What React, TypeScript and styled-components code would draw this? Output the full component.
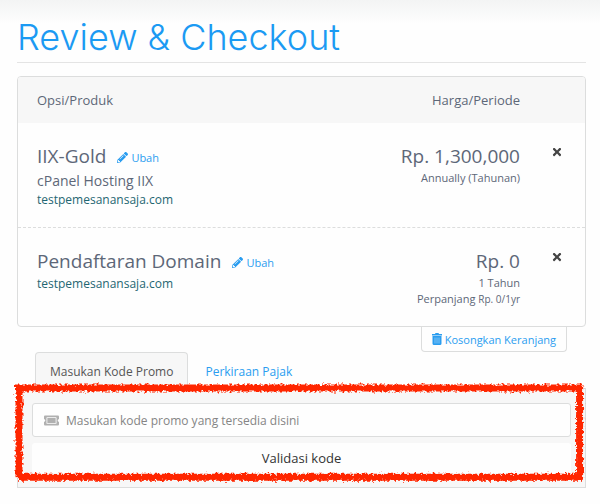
import React, { useState } from "react";
import styled, { createGlobalStyle } from "styled-components";
import { FaPencilAlt, FaTicketAlt, FaTimes } from "react-icons/fa";

const GlobalStyle = createGlobalStyle`
  * { box-sizing: border-box; }
  body {
    margin: 0;
    background: #fefefe;
    color: #5d6778;
    font-family: "Open Sans", "Noto Sans", sans-serif;
    font-size: 14px;
  }
  button, input { font-family: inherit; }
`;

const Page = styled.main`
  padding: 14px 14px 16px 17px;
  background: linear-gradient(#f3f4f4, #fefefe 24px);
`;

const Title = styled.h1`
  margin: 0 0 13px;
  padding-bottom: 1px;
  border-bottom: 1px solid #e4e4e4;
  color: #1b9af3;
  font: 300 36px/47px Inter, sans-serif;
`;

const Card = styled.section`
  border: 1px solid #dcdddd;
  border-radius: 4px;
  background: #fefefe;
  overflow: hidden;
`;

const CardHeader = styled.header`
  display: flex;
  justify-content: space-between;
  padding: 13px 65px 13px 19px;
  background: #f7f7f7;
  font-size: 13px;
  line-height: 20px;
`;

const Item = styled.article`
  display: grid;
  grid-template-columns: 1fr auto 16px;
  padding: 19px 20px 18px 19px;

  & + & {
    border-top: 1px dashed #dcdddd;
  }
`;

const ItemMain = styled.div`
  display: flex;
  flex-direction: column;
  align-items: flex-start;
`;

const NameRow = styled.div`
  display: flex;
  align-items: center;
  gap: 11px;
`;

const Name = styled.h2`
  margin: 0;
  font-size: 19px;
  line-height: 28px;
  font-weight: 400;
`;

const EditLink = styled.a`
  display: inline-flex;
  align-items: center;
  gap: 3px;
  padding-top: 3px;
  color: #2a9df0;
  font-size: 11px;
  line-height: 16px;
  text-decoration: none;
`;

const Group = styled.span`
  font-size: 14px;
  line-height: 21px;
`;

const Domain = styled.span`
  color: #1f6672;
  font-size: 12px;
  line-height: 18px;
`;

const Pricing = styled.div`
  display: flex;
  flex-direction: column;
  align-items: flex-end;
  margin-right: 29px;
  padding-bottom: 1px;
  font-size: 11px;
  line-height: 16px;
`;

const Price = styled.span`
  font-size: 19px;
  line-height: 28px;
`;

const Small = styled.small`
  font-size: 10px;
`;

const RemoveButton = styled.button`
  align-self: start;
  display: grid;
  place-items: center;
  height: 20px;
  padding: 0;
  border: 0;
  background: none;
  color: #444;
  font-size: 12px;
`;

const EmptyRow = styled.div`
  display: flex;
  justify-content: flex-end;
  padding-right: 19px;
`;

const EmptyButton = styled.button`
  display: flex;
  align-items: center;
  gap: 3px;
  height: 25px;
  padding: 0 10px;
  border: 1px solid #dcdddd;
  border-top: 0;
  border-radius: 0 0 4px 4px;
  background: #fefefe;
  color: #2a9df0;
  font-size: 11px;
`;

const Tabs = styled.div`
  display: flex;
  gap: 2px;
  padding-left: 18px;
`;

const Tab = styled.button<{ $active: boolean }>`
  height: 37px;
  margin-bottom: -1px;
  padding: 0 14px;
  border: 1px solid ${(p) => (p.$active ? "#dcdddd" : "transparent")};
  border-bottom: 0;
  border-radius: 4px 4px 0 0;
  background: ${(p) => (p.$active ? "#f7f7f7" : "transparent")};
  color: ${(p) => (p.$active ? "#555" : "#2a9df0")};
  font-size: 12px;
`;

const Panel = styled.form`
  position: relative;
  display: flex;
  flex-direction: column;
  gap: 6px;
  padding: 14px;
  border: 1px solid #dcdddd;
  background: #f7f7f7;
`;

const Field = styled.label`
  display: flex;
  align-items: center;
  gap: 7px;
  height: 34px;
  padding: 0 11px;
  border: 1px solid #dcdddd;
  border-radius: 3px;
  background: #fefefe;
  color: #b0b0b0;
  font-size: 15px;
`;

const CodeInput = styled.input`
  flex: 1;
  min-width: 0;
  padding: 0;
  border: 0;
  outline: 0;
  background: none;
  color: #555;
  font-size: 12px;

  &::placeholder { color: #858585; opacity: 1; }
`;

const SubmitButton = styled.button`
  height: 30px;
  border: 0;
  border-radius: 3px;
  background: #fefefe;
  color: #333;
  font-size: 13px;
`;

const TrashIcon = () => (
  <svg width="10" height="12" viewBox="0 0 20 24" aria-hidden="true">
    <path
      fill="#2a9df0"
      d="M7 0h6l1 2h6v3H0V2h6zM1 6h18v15a3 3 0 0 1-3 3H4a3 3 0 0 1-3-3z"
    />
    <path stroke="#a9d7f8" strokeWidth="1.4" d="M6 9v12M10 9v12M14 9v12" />
  </svg>
);

const Marker = styled.svg`
  position: absolute;
  top: -4px;
  left: -3px;
  width: calc(100% + 1px);
  height: calc(100% - 2px);
  overflow: visible;
  pointer-events: none;
`;

const MarkerFrame = () => (
  <Marker aria-hidden="true">
    <defs>
      <filter
        id="crayon"
        filterUnits="userSpaceOnUse"
        x="-5"
        y="-5"
        width="110%"
        height="120%"
        colorInterpolationFilters="sRGB"
      >
        <feTurbulence type="fractalNoise" baseFrequency="0.4" numOctaves="2" seed="4" result="noise" />
        <feDisplacementMap in="SourceGraphic" in2="noise" scale="6" xChannelSelector="R" yChannelSelector="G" />
        <feGaussianBlur stdDeviation="0.4" />
      </filter>
    </defs>
    <g filter="url(#crayon)" stroke="#ff2600" strokeWidth="7">
      <line x1="0" y1="3" x2="100%" y2="3" />
      <line x1="3" y1="96%" x2="100%" y2="96%" />
      <line x1="4" y1="0" x2="4" y2="96%" />
      <line x1="99.4%" y1="0" x2="99.4%" y2="99%" />
    </g>
  </Marker>
);

type CartItem = {
  name: string;
  group?: string;
  domain: string;
  price: string;
  cycle: string;
  renewal?: string;
};

const items: CartItem[] = [
  {
    name: "IIX-Gold",
    group: "cPanel Hosting IIX",
    domain: "testpemesanansaja.com",
    price: "Rp. 1,300,000",
    cycle: "Annually (Tahunan)",
  },
  {
    name: "Pendaftaran Domain",
    domain: "testpemesanansaja.com",
    price: "Rp. 0",
    cycle: "1 Tahun",
    renewal: "Rp. 0/1yr",
  },
];

const tabs = ["Masukan Kode Promo", "Perkiraan Pajak"];

export default function App() {
  const [active, setActive] = useState(0);
  return (
    <>
      <GlobalStyle />
      <Page>
        <Title>Review &amp; Checkout</Title>
        <Card>
          <CardHeader>
            <span>Opsi/Produk</span>
            <span>Harga/Periode</span>
          </CardHeader>
          {items.map((item) => (
            <Item key={item.name}>
              <ItemMain>
                <NameRow>
                  <Name>{item.name}</Name>
                  <EditLink href="#ubah">
                    <FaPencilAlt />
                    Ubah
                  </EditLink>
                </NameRow>
                {item.group && <Group>{item.group}</Group>}
                <Domain>{item.domain}</Domain>
              </ItemMain>
              <Pricing>
                <Price>{item.price}</Price>
                <span>{item.cycle}</span>
                {item.renewal && (
                  <span>
                    Perpanjang <Small>{item.renewal}</Small>
                  </span>
                )}
              </Pricing>
              <RemoveButton type="button" aria-label={`Hapus ${item.name}`}>
                <FaTimes />
              </RemoveButton>
            </Item>
          ))}
        </Card>
        <EmptyRow>
          <EmptyButton type="button">
            <TrashIcon />
            Kosongkan Keranjang
          </EmptyButton>
        </EmptyRow>
        <Tabs role="tablist">
          {tabs.map((tab, i) => (
            <Tab
              key={tab}
              type="button"
              role="tab"
              aria-selected={i === active}
              $active={i === active}
              onClick={() => setActive(i)}
            >
              {tab}
            </Tab>
          ))}
        </Tabs>
        <Panel onSubmit={(e) => e.preventDefault()}>
          <Field>
            <FaTicketAlt />
            <CodeInput
              type="text"
              aria-label="Kode promo"
              placeholder="Masukan kode promo yang tersedia disini"
            />
          </Field>
          <SubmitButton type="submit">Validasi kode</SubmitButton>
          <MarkerFrame />
        </Panel>
      </Page>
    </>
  );
}
